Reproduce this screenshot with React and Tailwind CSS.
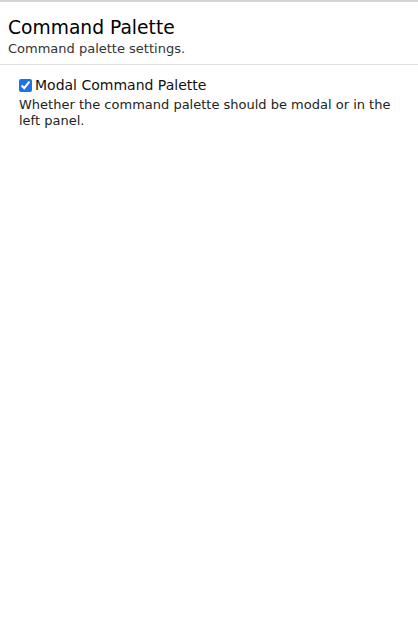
export default function App() {
  return (
    <div className="min-h-[643px] bg-white border-t-2 border-[#d4d4d4] font-['DejaVu_Sans',sans-serif] text-[#111]">
      <div className="px-2 pt-[15px] pb-[7px] border-b border-[#e0e0e0]">
        <h1 className="text-[18.7px] leading-[22px] text-black">Command Palette</h1>
        <p className="mt-[1px] text-[13px] leading-[17px] text-[#333]">Command palette settings.</p>
      </div>
      <div className="px-[19px] pt-[11px]">
        <label className="flex items-center gap-[3px] text-[14px] leading-[18px]">
          <input type="checkbox" defaultChecked className="w-[13px] h-[13px] m-0 accent-[#1a73e8]" />
          <span>Modal Command Palette</span>
        </label>
        <p className="mt-[3px] text-[13px] leading-[16px] text-[#222]">
          Whether the command palette should be modal or in the left panel.
        </p>
      </div>
    </div>
  )
}
